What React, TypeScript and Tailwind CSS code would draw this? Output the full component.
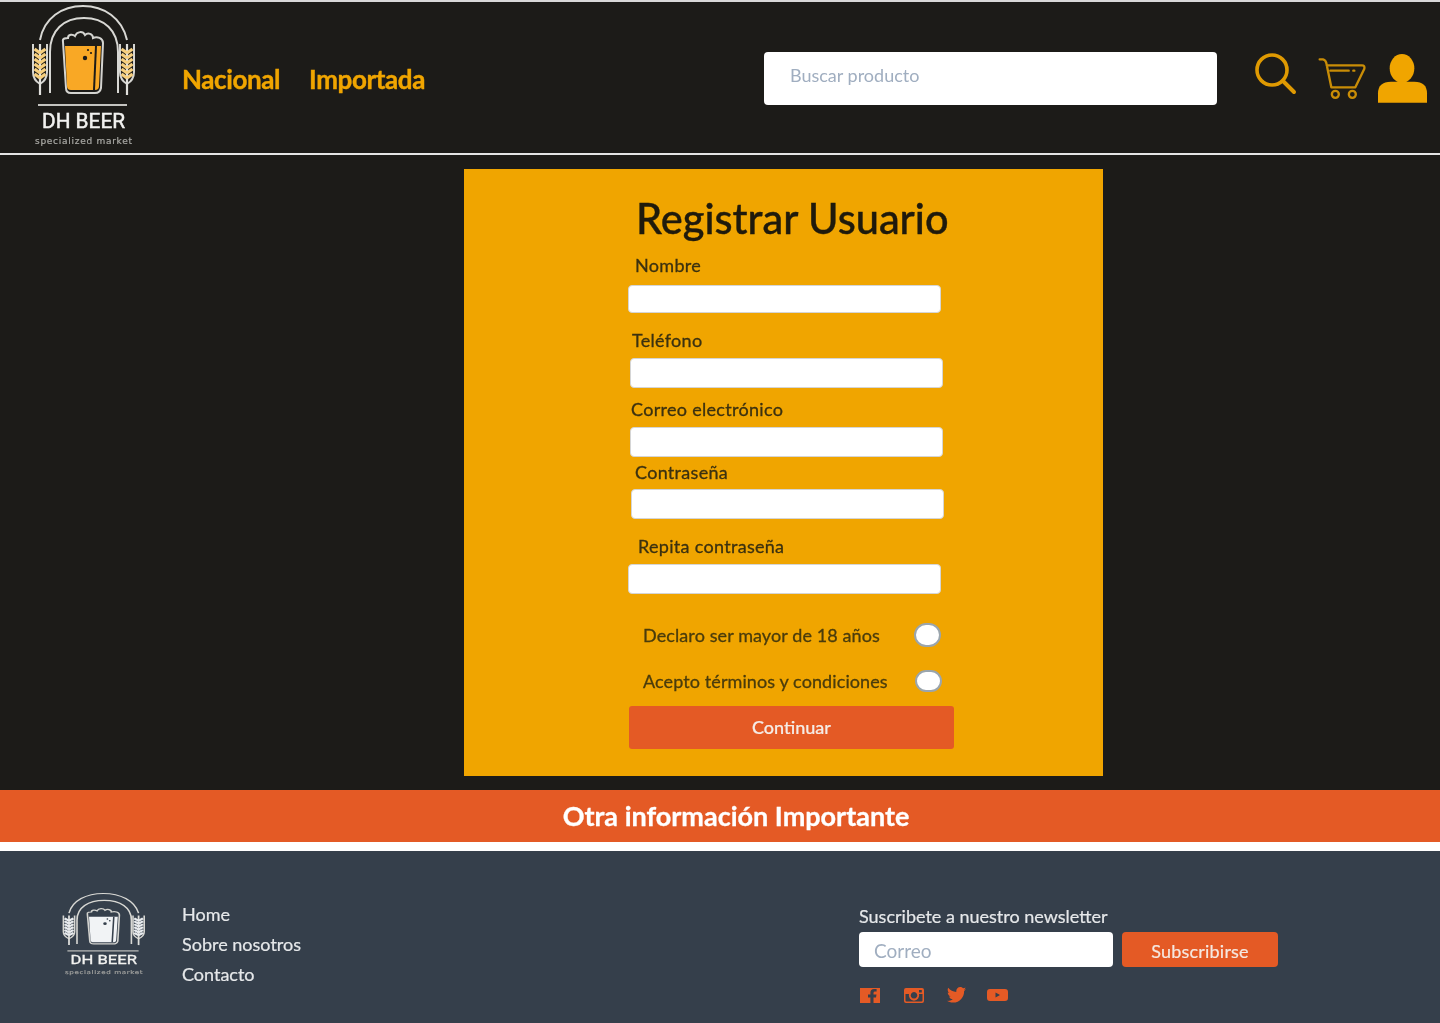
import React from "react";

function Wheat({ x, mono }: { x: number; mono: boolean }) {
  const fill = mono ? "#e8ebee" : "#f6cf7e";
  const ys = [49, 54, 59, 64, 69, 74];
  return (
    <g>
      <path d={`M${x - 7} 44 V72 Q${x - 7} 80 ${x} 84 Q${x + 7} 80 ${x + 7} 72 V44`} fill="none" stroke="#d6d6d2" strokeWidth="2" />
      <path d={`M${x} 44 V95`} stroke="#e0e0dc" strokeWidth="2.2" />
      {ys.map((y) => (
        <g key={y}>
          <path d={`M${x} ${y + 4} L${x - 5.5} ${y}`} stroke={fill} strokeWidth="3.4" />
          <path d={`M${x} ${y + 4} L${x + 5.5} ${y}`} stroke={fill} strokeWidth="3.4" />
        </g>
      ))}
    </g>
  );
}

function Logo({ mono, className }: { mono: boolean; className: string }) {
  const glass = mono ? "#f1f3f5" : "#f9a825";
  const dark = mono ? "#353f4b" : "#1c1b18";
  return (
    <svg viewBox="30 0 110 150" preserveAspectRatio="none" className={className}>
      <path d="M40 40 C44 18 62 6 83 6 C104 6 122 18 127 40" fill="none" stroke="#d8d8d4" strokeWidth="2" />
      <path d="M50 93 V52 C50 30 64 18 84 18 C104 18 118 30 118 52 V93" fill="none" stroke="#d8d8d4" strokeWidth="2" />
      <Wheat x={40} mono={mono} />
      <Wheat x={127} mono={mono} />
      <path
        d="M63 42 C62 38 66 38 68 38 C68 34 73 34 75 36 C77 31 83 31 85 35 C88 32 93 34 93 38 C97 36 103 38 103 43 L101 88 Q100 93 95 93 H71 Q66 93 66 88 Z"
        fill={dark}
        stroke="#d4d4d0"
        strokeWidth="2"
      />
      <path d="M65 46 H101 L99 86 Q99 90 95 90 H71 Q67 90 67 86 Z" fill={glass} />
      <path d="M96 46 L94 90" stroke={dark} strokeWidth="2" />
      <circle cx="85" cy="58" r="2.2" fill={dark} />
      <circle cx="88" cy="50" r="1.1" fill={dark} />
      <circle cx="91" cy="53" r="1.1" fill={dark} />
      <rect x="38" y="104" width="89" height="2" fill="#c4c4c0" />
      <text x="83.5" y="128" textAnchor="middle" fontFamily="Roboto, sans-serif" fontSize="20.5" fill="#f2f2f0" stroke="#f2f2f0" strokeWidth="0.5" textLength="83" lengthAdjust="spacingAndGlyphs">
        DH BEER
      </text>
      <text x="83.5" y="144" textAnchor="middle" fontFamily="'DejaVu Sans', sans-serif" fontSize="9" fill="#a9a9a5" stroke="#a9a9a5" strokeWidth="0.2" textLength="97" lengthAdjust="spacing">
        specialized market
      </text>
    </svg>
  );
}

function SearchIcon() {
  return (
    <svg viewBox="1255 50 44 56" className="h-[56px] w-[44px] shrink-0" fill="none" stroke="#df9a02" strokeWidth="3.6" strokeLinecap="round">
      <circle cx="1272" cy="70" r="15" />
      <path d="M1283 81 L1294 92" strokeWidth="4" />
    </svg>
  );
}

function CartIcon() {
  return (
    <svg viewBox="230 30 156 168" className="h-[56px] w-[52px] shrink-0" fill="none" stroke="#c98d06" strokeWidth="7" strokeLinecap="round" strokeLinejoin="round">
      <path d="M238 58 H248 Q257 60 259 74 L273 142 H345 L372 86 Q374 76 365 76 H259" />
      <path d="M270 92 H325" />
      <path d="M339 92 H342" />
      <circle cx="285" cy="163" r="10.5" />
      <circle cx="336" cy="163" r="10.5" />
    </svg>
  );
}

function UserIcon() {
  return (
    <svg viewBox="410 30 162 168" className="h-[56px] w-[54px] shrink-0" fill="#f0a500">
      <ellipse cx="488" cy="85" rx="37" ry="43" />
      <path d="M416 188 V160 Q416 125 455 125 H525 Q563 125 563 160 V188 Z" />
    </svg>
  );
}

function Field({ label, labelClass, inputClass }: { label: string; labelClass: string; inputClass: string }) {
  return (
    <>
      <label className={`block text-[18px] leading-[20px] tracking-[0.3px] text-[#3b3110] [-webkit-text-stroke:0.3px] ${labelClass}`}>{label}</label>
      <input className={`block w-[313px] rounded-[4px] border border-[#d5d5d5] bg-white ${inputClass}`} />
    </>
  );
}

function Check({ label, className, textClass, radioClass }: { label: string; className: string; textClass: string; radioClass: string }) {
  return (
    <div className={`flex items-center ${className}`}>
      <span className={`text-[18px] leading-[20px] tracking-[0.1px] text-[#4a3c0c] [-webkit-text-stroke:0.3px] ${textClass}`}>{label}</span>
      <input type="radio" className={`w-[27px] appearance-none rounded-full border-2 border-[#9aa5ad] bg-white ${radioClass}`} />
    </div>
  );
}

export default function App() {
  return (
    <div className="flex h-[1023px] w-[1440px] flex-col overflow-hidden bg-[#1c1b18] font-[Lato,sans-serif] blur-[0.5px]">
      <header className="flex h-[155px] shrink-0 items-start border-t-2 border-b-2 border-t-[#d8d8d8] border-b-[#e4e4e4] pr-[10px] pl-[30px]">
        <Logo mono={false} className="-mt-[2px] h-[150px] w-[110px] shrink-0" />
        <nav className="mt-[59px] ml-[42px] flex gap-[29px] text-[26px] leading-[36px] font-bold tracking-[-0.4px] text-[#f0a500] [-webkit-text-stroke:0.4px]">
          <a>Nacional</a>
          <a>Importada</a>
        </nav>
        <div className="mt-[48px] ml-auto flex items-start">
          <input
            placeholder="Buscar producto"
            className="mt-[2px] h-[53px] w-[453px] rounded-[4px] bg-white pb-[8px] pl-[26px] text-[18px] placeholder:text-[#a0aec0]"
          />
          <div className="ml-[38px]"><SearchIcon /></div>
          <div className="ml-[18px]"><CartIcon /></div>
          <div className="ml-[7px]"><UserIcon /></div>
        </div>
      </header>

      <main className="flex flex-1 pl-[464px]">
        <section className="mt-[14px] h-[607px] w-[639px] bg-[#f0a500]">
          <h1 className="mt-[24px] ml-[172px] text-[41.5px] leading-[50px] font-medium text-[#1f1a0c] [-webkit-text-stroke:0.4px]">Registrar Usuario</h1>
          <Field label="Nombre" labelClass="mt-[12px] ml-[171px]" inputClass="mt-[10px] ml-[164px] h-[28px]" />
          <Field label="Teléfono" labelClass="mt-[17px] ml-[168px]" inputClass="mt-[8px] ml-[166px] h-[30px]" />
          <Field label="Correo electrónico" labelClass="mt-[11px] ml-[167px]" inputClass="mt-[8px] ml-[166px] h-[30px]" />
          <Field label="Contraseña" labelClass="mt-[5px] ml-[171px]" inputClass="mt-[7px] ml-[167px] h-[30px]" />
          <Field label="Repita contraseña" labelClass="mt-[17px] ml-[174px]" inputClass="mt-[8px] ml-[164px] h-[30px]" />
          <Check label="Declaro ser mayor de 18 años" className="mt-[29px] ml-[179px]" textClass="w-[271px]" radioClass="h-[24px]" />
          <Check label="Acepto términos y condiciones" className="mt-[23px] ml-[179px]" textClass="w-[272px]" radioClass="h-[22px]" />
          <button className="mt-[14px] ml-[165px] block h-[43px] w-[325px] rounded-[3px] bg-[#e45a25] text-[18px] font-medium text-[#f5ece6] [-webkit-text-stroke:0.2px]">
            Continuar
          </button>
        </section>
      </main>

      <div className="flex h-[52px] shrink-0 items-center justify-center bg-[#e45a25] pl-[32px] text-[27px] font-bold text-white [-webkit-text-stroke:0.3px]">
        Otra información Importante
      </div>
      <div className="h-[9px] shrink-0 bg-white" />

      <footer className="flex h-[172px] shrink-0 bg-[#353f4b] pl-[61px] text-[#e6e8ea]">
        <Logo mono className="mt-[39px] h-[87px] w-[88px] shrink-0" />
        <ul className="mt-[48px] ml-[33px] w-[677px] text-[18px] leading-[30px] [-webkit-text-stroke:0.2px]">
          <li>Home</li>
          <li>Sobre nosotros</li>
          <li>Contacto</li>
        </ul>
        <div className="mt-[53px]">
          <p className="text-[18px] leading-[24px] [-webkit-text-stroke:0.2px]">Suscribete a nuestro newsletter</p>
          <div className="mt-[4px] flex gap-[9px]">
            <input placeholder="Correo" className="h-[35px] w-[254px] rounded-[4px] bg-white pt-[2px] pl-[15px] text-[19px] placeholder:text-[#a0aec0]" />
            <button className="h-[35px] w-[156px] rounded-[4px] bg-[#e45a25] pt-[3px] text-[18px] tracking-[0.2px] text-[#f5e8e0] [-webkit-text-stroke:0.2px]">Subscribirse</button>
          </div>
          <div className="mt-[20px] flex items-center">
            <svg viewBox="0 0 20 15" className="ml-[1px] h-[15px] w-[20px]" fill="#e45a25">
              <path d="M0 0 H20 V15 H13.5 V9.5 H16 L16.5 6.5 H13.5 V5 Q13.5 3.6 15 3.6 H16.6 V1 H14 Q10.4 1 10.4 4.6 V6.5 H8 V9.5 H10.4 V15 H0 Z" />
            </svg>
            <svg viewBox="0 0 20 15" className="ml-[24px] h-[15px] w-[20px]" fill="#e45a25">
              <path fillRule="evenodd" d="M2 0 H18 Q20 0 20 2 V13 Q20 15 18 15 H2 Q0 15 0 13 V2 Q0 0 2 0 Z M1.500 6 V12.500 Q1.500 13.500 2.500 13.500 H17.500 Q18.500 13.500 18.500 12.500 V6 H15 A5.200 5.200 0 1 1 5 6 Z M10 4 A3.300 3.300 0 1 0 10.010 4 Z M15 2 V4.500 H17.800 V2 Z" />
            </svg>
            <svg viewBox="0 0 24 20" className="ml-[22px] h-[16px] w-[21px]" fill="#e45a25">
              <path d="M24 2.400 c-.9.4-1.800.7-2.800.8 1-.6 1.800-1.600 2.200-2.700-1 .6-2 1-3.100 1.200C19.300.700 18 .1 16.600.1c-2.700 0-4.900 2.200-4.900 4.900 0 .4 0 .8.100 1.100C7.700 5.900 4.100 4 1.700.9 1.200 1.600 1 2.500 1 3.400c0 1.700.9 3.200 2.200 4.100-.8 0-1.600-.2-2.200-.6v.1c0 2.400 1.700 4.400 3.900 4.800-.4.1-.8.2-1.300.2-.3 0-.6 0-.9-.1.600 1.900 2.400 3.300 4.600 3.400-1.700 1.300-3.800 2.100-6.100 2.100-.4 0-.8 0-1.200-.1 2.200 1.400 4.800 2.200 7.500 2.200 9.100 0 14-7.500 14-14v-.6c1-.7 1.800-1.600 2.500-2.500z" />
            </svg>
            <svg viewBox="0 0 21 12" className="ml-[20px] h-[12px] w-[21px]" fill="#e45a25">
              <path fillRule="evenodd" d="M3 0 H18 Q21 0 21 3 V9 Q21 12 18 12 H3 Q0 12 0 9 V3 Q0 0 3 0 Z M8.500 3.500 V8.500 L13 6 Z" />
            </svg>
          </div>
        </div>
      </footer>
    </div>
  );
}
